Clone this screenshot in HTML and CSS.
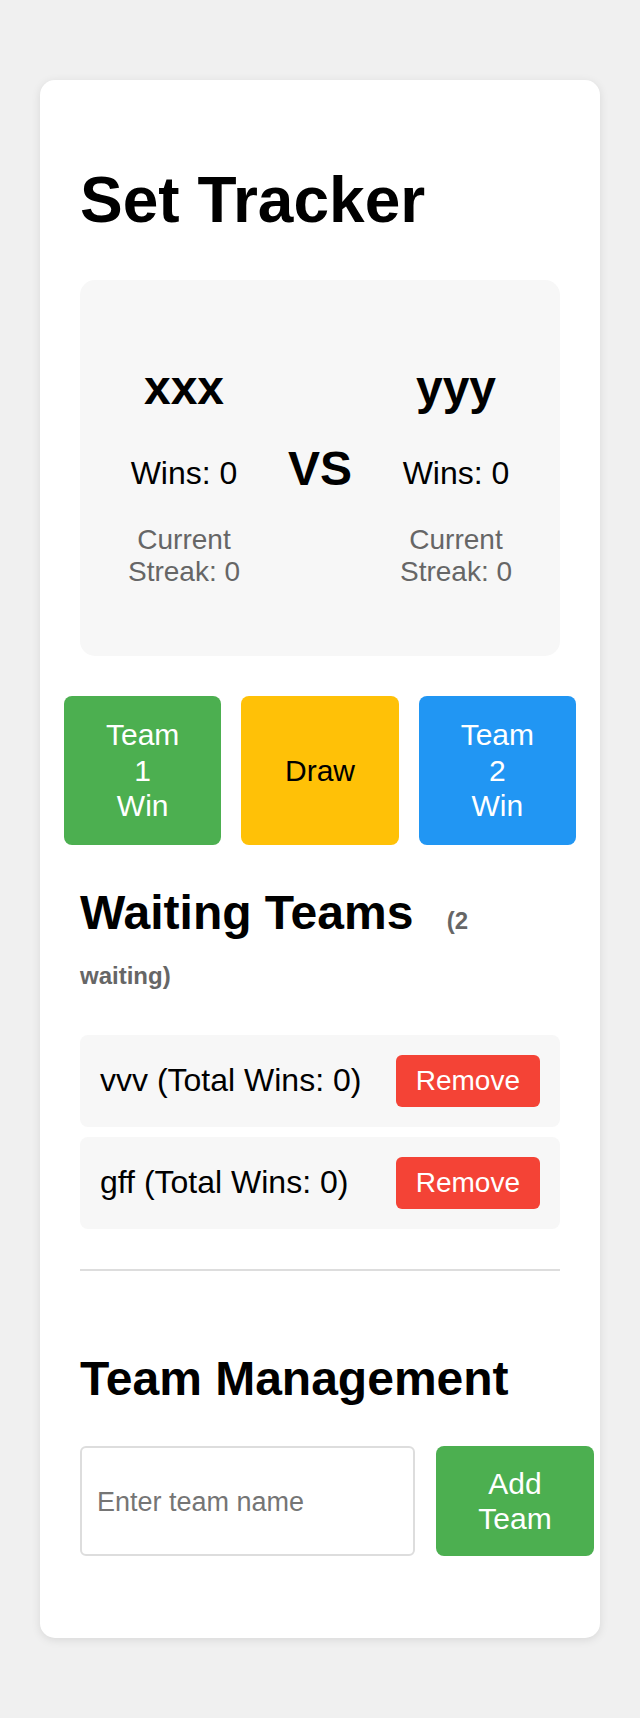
FILE: index.html
```html
<!DOCTYPE html>
<html lang="en">
<head>
<meta charset="utf-8">
<title>Set Tracker</title>
<link rel="stylesheet" href="styles.css">
</head>
<body>
  <div class="card">
    <h1 class="title">Set Tracker</h1>

    <div class="scoreboard">
      <div class="team">
        <h2 class="team-name">xxx</h2>
        <p class="wins">Wins: 0</p>
        <p class="streak">Current Streak: 0</p>
      </div>
      <div class="vs">VS</div>
      <div class="team">
        <h2 class="team-name">yyy</h2>
        <p class="wins">Wins: 0</p>
        <p class="streak">Current Streak: 0</p>
      </div>
    </div>

    <div class="actions">
      <button class="btn btn-green">Team 1 Win</button>
      <button class="btn btn-yellow">Draw</button>
      <button class="btn btn-blue">Team 2 Win</button>
    </div>

    <h2 class="section-title">Waiting Teams <span class="count">(2 waiting)</span></h2>

    <div class="queue">
      <div class="queue-item">
        <span class="queue-name">vvv (Total Wins: 0)</span>
        <button class="btn-remove">Remove</button>
      </div>
      <div class="queue-item">
        <span class="queue-name">gff (Total Wins: 0)</span>
        <button class="btn-remove">Remove</button>
      </div>
    </div>

    <hr class="divider">

    <div class="management">
      <h2 class="section-title">Team Management</h2>
      <div class="add-row">
        <input class="team-input" type="text" placeholder="Enter team name">
        <button class="btn btn-green btn-add">Add Team</button>
      </div>
    </div>
  </div>
</body>
</html>
```

FILE: styles.css
```css
* {
  box-sizing: border-box;
}

body {
  margin: 0;
  padding: 40px;
  background: #f0f0f0;
  font-family: "Liberation Sans", Arial, sans-serif;
  color: #000;
}

.card {
  margin: 40px auto;
  background: #fff;
  border-radius: 15px;
  padding: 40px;
  box-shadow: 0 2px 10px rgba(0, 0, 0, 0.1);
}

.title {
  font-size: 64px;
  font-weight: bold;
  margin: 43px 0;
}

.scoreboard {
  display: flex;
  align-items: center;
  background: #f7f7f7;
  border-radius: 15px;
  padding: 40px 20px;
}

.team {
  flex: 1;
  text-align: center;
}

.team-name {
  font-size: 48px;
  font-weight: bold;
  margin: 40px 0;
}

.wins {
  font-size: 32px;
  margin: 32px 0;
}

.streak {
  font-size: 28px;
  color: #666;
  margin: 28px 0;
}

.vs {
  font-size: 48px;
  font-weight: bold;
  margin: 0 20px;
}

.actions {
  display: grid;
  grid-template-columns: repeat(3, 1fr);
  gap: 20px;
  margin: 40px -16px 0;
}

.btn {
  border: none;
  border-radius: 8px;
  padding: 21px 41px;
  font-family: "Liberation Sans", Arial, sans-serif;
  font-size: 30px;
  line-height: 35.5px;
  color: #fff;
  cursor: pointer;
}

.btn-green {
  background: #4caf50;
}

.btn-yellow {
  background: #ffc107;
  color: #000;
}

.btn-blue {
  background: #2196f3;
}

.section-title {
  font-size: 48px;
  font-weight: bold;
  margin: 40px 0;
}

.count {
  font-size: 24px;
  color: #666;
  margin-left: 20px;
}

.queue-item {
  display: flex;
  justify-content: space-between;
  align-items: center;
  background: #f7f7f7;
  border-radius: 8px;
  padding: 20px;
  margin-bottom: 10px;
}

.queue-name {
  font-size: 32px;
}

.btn-remove {
  border: none;
  border-radius: 6px;
  background: #f44336;
  color: #fff;
  font-family: "Liberation Sans", Arial, sans-serif;
  font-size: 28px;
  padding: 10px 20px;
  cursor: pointer;
}

.divider {
  border: none;
  border-top: 2px solid #ddd;
  margin: 40px 0;
}

.management {
  margin-top: 80px;
}

.add-row {
  display: flex;
  gap: 21px;
  margin-bottom: 42px;
}

.team-input {
  flex: 0 0 335px;
  width: 335px;
  min-width: 0;
  border: 2px solid #ddd;
  border-radius: 6px;
  padding: 4px 15px 0;
  font-family: "Liberation Sans", Arial, sans-serif;
  font-size: 27px;
  background: #fff;
}

.team-input::placeholder {
  color: #757575;
}

.btn-add {
  flex: 0 0 158px;
  padding: 20px 30px;
  line-height: 35px;
}
```
